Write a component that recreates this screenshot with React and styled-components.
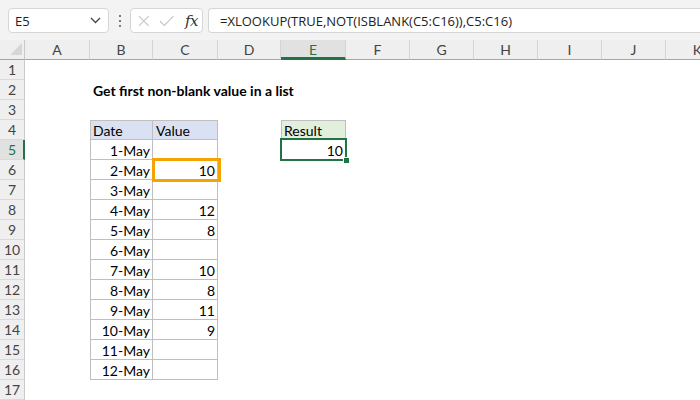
import styled, { createGlobalStyle } from 'styled-components';

const GlobalStyle = createGlobalStyle`
  html, body {
    margin: 0;
    padding: 0;
    background: #fff;
    overflow: hidden;
  }
`;

const COLS = ['A', 'B', 'C', 'D', 'E', 'F', 'G', 'H', 'I', 'J', 'K'];
const WIDTHS = [65, 63, 65, 63, 65, 64, 64, 64, 64, 64, 64];
const ROWS = 17;

const dates = ['1-May', '2-May', '3-May', '4-May', '5-May', '6-May', '7-May', '8-May', '9-May', '10-May', '11-May', '12-May'];
const values = ['', '10', '', '12', '8', '', '10', '8', '11', '9', '', ''];

// build the cell map
const cells = {
  B2: { text: 'Get first non-blank value in a list', bold: true },
  B4: { text: 'Date', fill: '#d9e1f2', table: true, top: true, left: true },
  C4: { text: 'Value', fill: '#d9e1f2', table: true, top: true },
  E4: { text: 'Result', fill: '#e2efda', table: true, top: true, left: true },
  E5: { text: '10', right: true, selected: true },
};
dates.forEach((d, i) => {
  const r = i + 5;
  cells['B' + r] = { text: d, right: true, table: true, left: true };
  cells['C' + r] = { text: values[i], right: true, table: true, highlight: r === 6 };
});

const Page = styled.div`
  width: 700px;
  height: 400px;
  overflow: hidden;
  background: #fff;
  font-family: Lato, "Liberation Sans", sans-serif;
`;

const Toolbar = styled.div`
  height: 40px;
  background: #f3f3f3;
  display: flex;
  align-items: flex-start;
  padding: 8px 0 0 8px;
  box-sizing: border-box;
`;

const Box = styled.div`
  height: 25px;
  box-sizing: border-box;
  background: #fff;
  border: 1px solid #d6d6d6;
  border-radius: 4px;
  display: flex;
  align-items: center;
`;

const NameBox = styled(Box)`
  width: 101px;
  padding: 0 7px 0 6px;
  justify-content: space-between;
  font-family: "Open Sans", "Noto Sans", sans-serif;
  font-size: 13px;
  color: #222;
`;

const Dots = styled.div`
  width: 21px;
  height: 25px;
  display: flex;
  flex-direction: column;
  align-items: center;
  justify-content: center;
  gap: 3px;

  span {
    width: 2px;
    height: 2px;
    background: #555;
    border-radius: 1px;
  }
`;

const FxBox = styled(Box)`
  width: 73px;
  padding: 0 4px 0 7px;
`;

const Fx = styled.span`
  font-family: "DejaVu Serif", "Liberation Serif", serif;
  font-style: italic;
  font-size: 15px;
  color: #333;
  margin-left: 11px;
  letter-spacing: -0.5px;
`;

const Formula = styled(Box)`
  flex: 1;
  margin-left: 5px;
  border-right: none;
  border-radius: 4px 0 0 4px;
  padding-left: 11px;
  font-family: "Open Sans", "Noto Sans", sans-serif;
  font-size: 13px;
  color: #222;
  white-space: nowrap;
`;

const Sheet = styled.div`
  display: grid;
  grid-template-columns: 25px ${WIDTHS.map((w) => w + 'px').join(' ')};
  grid-auto-rows: 20px;
`;

const Corner = styled.div`
  background: #efefef;
  border-right: 1px solid #c9c9c9;
  border-bottom: 1px solid #a6a6a6;
  box-sizing: border-box;
  display: flex;
`;

const ColHead = styled.div`
  box-sizing: border-box;
  background: ${(p) => (p.$active ? '#e1e1e1' : '#efefef')};
  border-right: 1px solid #d4d4d4;
  border-bottom: ${(p) => (p.$active ? '3px solid #217346' : '1px solid #a6a6a6')};
  color: ${(p) => (p.$active ? '#217346' : '#444')};
  font-size: 14px;
  display: flex;
  align-items: center;
  justify-content: center;
  padding-top: ${(p) => (p.$active ? '2px' : '0')};
`;

const RowHead = styled.div`
  box-sizing: border-box;
  background: ${(p) => (p.$active ? '#e1e1e1' : '#efefef')};
  border-right: ${(p) => (p.$active ? '2px solid #217346' : '1px solid #c9c9c9')};
  border-bottom: 1px solid #dadada;
  color: ${(p) => (p.$active ? '#217346' : '#444')};
  font-size: 14px;
  display: flex;
  align-items: center;
  justify-content: center;
  padding-left: ${(p) => (p.$active ? '1px' : '0')};
`;

const Cell = styled.div`
  position: relative;
  box-sizing: border-box;
  background: ${(p) => p.$fill || 'transparent'};
  box-shadow: ${(p) =>
    p.$table
      ? [
          'inset -1px -1px 0 #bfbfbf',
          p.$left ? 'inset 1px 0 0 #bfbfbf' : null,
          p.$top ? 'inset 0 1px 0 #bfbfbf' : null,
        ]
          .filter(Boolean)
          .join(', ')
      : 'none'};
  font-size: 14px;
  font-weight: ${(p) => (p.$bold ? 700 : 400)};
  color: #000;
  white-space: nowrap;
  display: flex;
  align-items: center;
  justify-content: ${(p) => (p.$right ? 'flex-end' : 'flex-start')};
  padding: 1px 3px 0 3px;
  z-index: ${(p) => (p.$raise ? 2 : 'auto')};
`;

const Highlight = styled.div`
  position: absolute;
  top: -2px;
  left: -1px;
  right: -3px;
  bottom: -2px;
  border: 3px solid #f5a300;
  pointer-events: none;
`;

const Selection = styled.div`
  position: absolute;
  top: -2px;
  left: -1px;
  right: -1px;
  bottom: -1px;
  border: 2px solid #217346;
  pointer-events: none;

  &::after {
    content: '';
    position: absolute;
    right: -5px;
    bottom: -5px;
    width: 5px;
    height: 5px;
    background: #217346;
    border: 1px solid #fff;
  }
`;

const Chevron = () => (
  <svg width="11" height="7" viewBox="0 0 11 7">
    <polyline points="1,1 5.5,5.5 10,1" fill="none" stroke="#444" strokeWidth="1.3" />
  </svg>
);

const Cross = () => (
  <svg width="12" height="12" viewBox="0 0 12 12">
    <path d="M1 1 L11 11 M11 1 L1 11" stroke="#c6c6c6" strokeWidth="1.2" fill="none" />
  </svg>
);

const Check = () => (
  <svg width="16" height="12" viewBox="0 0 16 12" style={{ marginLeft: 9 }}>
    <polyline points="1,6 5.5,10.5 15,1" stroke="#c6c6c6" strokeWidth="1.2" fill="none" />
  </svg>
);

const SelectAll = () => (
  <svg width="24" height="19" viewBox="0 0 24 19">
    <polygon points="22,3 22,15 10,15" fill="#d6d6d6" />
  </svg>
);

export default function App() {
  const rows = [];
  for (let r = 1; r <= ROWS; r++) {
    rows.push(
      <RowHead key={'h' + r} $active={r === 5}>
        {r}
      </RowHead>
    );
    COLS.forEach((c) => {
      const cell = cells[c + r] || {};
      rows.push(
        <Cell
          key={c + r}
          $fill={cell.fill}
          $table={cell.table}
          $left={cell.left}
          $top={cell.top}
          $right={cell.right}
          $bold={cell.bold}
          $raise={cell.highlight || cell.selected}
        >
          {cell.text}
          {cell.highlight && <Highlight />}
          {cell.selected && <Selection />}
        </Cell>
      );
    });
  }

  return (
    <Page>
      <GlobalStyle />
      <Toolbar>
        <NameBox>
          <span>E5</span>
          <Chevron />
        </NameBox>
        <Dots>
          <span />
          <span />
          <span />
        </Dots>
        <FxBox>
          <Cross />
          <Check />
          <Fx>fx</Fx>
        </FxBox>
        <Formula>=XLOOKUP(TRUE,NOT(ISBLANK(C5:C16)),C5:C16)</Formula>
      </Toolbar>
      <Sheet>
        <Corner>
          <SelectAll />
        </Corner>
        {COLS.map((c) => (
          <ColHead key={c} $active={c === 'E'}>
            {c}
          </ColHead>
        ))}
        {rows}
      </Sheet>
    </Page>
  );
}
